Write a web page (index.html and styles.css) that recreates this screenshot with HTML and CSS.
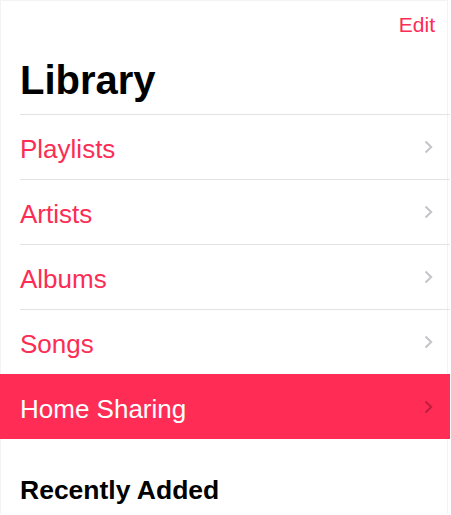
FILE: index.html
```html
<!DOCTYPE html>
<html lang="en">
  <head>
    <title>Library</title>
    <link rel="stylesheet" href="styles.css">
  </head>
  <body>
    <div class="screen">
      <div class="nav"><span class="edit">Edit</span></div>
      <h1 class="title">Library</h1>
      <ul class="list">
        <li class="row"><div class="cell"><span>Playlists</span><svg class="chev" viewBox="0 0 9 14"><path d="M1.5 1.5 L7.2 7 L1.5 12.5"/></svg></div></li>
        <li class="row"><div class="cell"><span>Artists</span><svg class="chev" viewBox="0 0 9 14"><path d="M1.5 1.5 L7.2 7 L1.5 12.5"/></svg></div></li>
        <li class="row"><div class="cell"><span>Albums</span><svg class="chev" viewBox="0 0 9 14"><path d="M1.5 1.5 L7.2 7 L1.5 12.5"/></svg></div></li>
        <li class="row"><div class="cell"><span>Songs</span><svg class="chev" viewBox="0 0 9 14"><path d="M1.5 1.5 L7.2 7 L1.5 12.5"/></svg></div></li>
        <li class="row active"><div class="cell"><span>Home Sharing</span><svg class="chev" viewBox="0 0 9 14"><path d="M1.5 1.5 L7.2 7 L1.5 12.5"/></svg></div></li>
      </ul>
      <h2 class="section">Recently Added</h2>
    </div>
  </body>
</html>
```
FILE: styles.css
```css
html, body {margin:0;padding:0;background:#fff}
body {font-family:"Liberation Sans", Arial, sans-serif;color:#000;height:515px;overflow:hidden}
.screen {border:1px solid #f3f3f3;border-bottom:0;margin-right:3px;height:514px;box-sizing:border-box}
.nav {display:flex;justify-content:flex-end;padding:12px 12px 0 0;height:36px;box-sizing:border-box}
.edit {font-size:21px;line-height:24px;color:#fc2c55}
.title {margin:19px 0 0 19px;font-size:40px;line-height:48px;font-weight:bold;height:58px}
.list {list-style:none;margin:0 -3px 0 -1px;padding:0}
.row {padding-left:20px}
.cell {display:flex;align-items:center;justify-content:space-between;height:64px;border-top:1px solid #e3e3e6;padding-right:17px}
.cell span {font-size:26px;line-height:60px;padding-top:4px;color:#fc2c55}
.chev {width:9px;height:14px;fill:none;stroke:#c4c4c9;stroke-width:2}
.row.active {background:#ff2d55;padding-left:0}
.row.active .cell {border-top-color:#ff2d55;padding-left:20px}
.row.active .cell span {color:#fff}
.row.active .chev {stroke:rgba(110,10,35,0.45)}
.section {margin:36px 0 0 19px;font-size:26.5px;line-height:30px;font-weight:bold}
```
